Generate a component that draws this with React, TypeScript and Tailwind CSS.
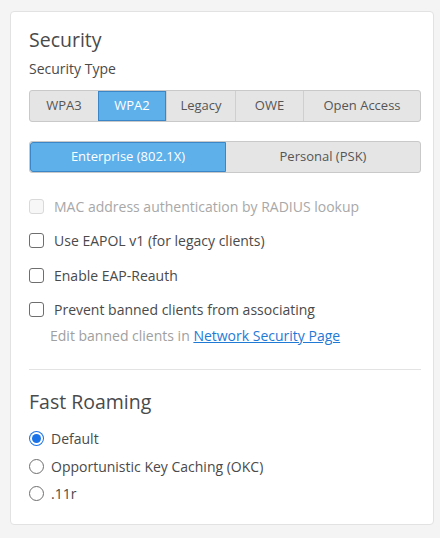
import React from "react";

const segs = ["WPA3", "WPA2", "Legacy", "OWE", "Open Access"];
const widths = ["w-[68px]", "w-[68px]", "w-[69px]", "w-[68px]", "flex-1"];

function Checkbox({ label, disabled }: { label: string; disabled?: boolean }) {
  return (
    <div className="flex items-center h-[20px]">
      <span
        className={`w-[15px] h-[15px] rounded-[3px] border ${
          disabled ? "border-[#d9d9d9] bg-[#f7f7f7]" : "border-[#6e6e6e] bg-white"
        }`}
      />
      <span className={`ml-[10px] text-[14px] ${disabled ? "text-[#a8a8a8]" : "text-[#4a4a4a]"}`}>{label}</span>
    </div>
  );
}

function Radio({ label, checked }: { label: string; checked?: boolean }) {
  return (
    <div className="flex items-center h-[20px]">
      {checked ? (
        <span className="w-[15px] h-[15px] rounded-full bg-[#1a73e8] flex items-center justify-center">
          <span className="w-[13px] h-[13px] rounded-full bg-white flex items-center justify-center">
            <span className="w-[9px] h-[9px] rounded-full bg-[#1a73e8]" />
          </span>
        </span>
      ) : (
        <span className="w-[15px] h-[15px] rounded-full border border-[#6e6e6e] bg-white" />
      )}
      <span className="ml-[7px] text-[14px] text-[#4a4a4a]">{label}</span>
    </div>
  );
}

export default function App() {
  return (
    <div className="w-[440px] h-[538px] bg-[#f4f4f4] pt-[11px] pl-[10px] pr-[6px]" style={{ fontFamily: '"Open Sans", sans-serif' }}>
      <div className="w-[424px] h-[514px] bg-white border border-[#e2e2e2] rounded-[4px] pl-[18px] pr-[12px] pt-[14px]">
        <div className="text-[19.5px] leading-[28px] text-[#4a4a4a]">Security</div>
        <div className="mt-[5px] text-[14px] leading-[20px] text-[#4a4a4a]">Security Type</div>
        <div className="mt-[11px] flex h-[32px] rounded-[3px] border border-[#c9c9c9] bg-[#e5e5e5] overflow-hidden">
          {segs.map((s, i) => (
            <div
              key={s}
              className={`${widths[i]} flex items-center justify-center text-[13px] ${
                i === 1
                  ? "bg-[#5eb0ea] text-white border border-[#3b86c6]"
                  : "text-[#555] " + (i > 1 ? "border-l border-[#cfcfcf]" : "")
              }`}
            >
              {s}
            </div>
          ))}
        </div>
        <div className="mt-[19px] flex h-[32px] rounded-[3px] border border-[#c9c9c9] bg-[#e5e5e5] overflow-hidden">
          <div className="w-[196px] bg-[#5eb0ea] border border-[#3b86c6] rounded-l-[3px] text-white text-[13px] flex items-center justify-center">
            Enterprise (802.1X)
          </div>
          <div className="flex-1 text-[#555] text-[13px] flex items-center justify-center">Personal (PSK)</div>
        </div>
        <div className="mt-[23px] flex flex-col gap-[14.5px]">
          <Checkbox label="MAC address authentication by RADIUS lookup" disabled />
          <Checkbox label="Use EAPOL v1 (for legacy clients)" />
          <Checkbox label="Enable EAP-Reauth" />
          <Checkbox label="Prevent banned clients from associating" />
        </div>
        <div className="mt-[6px] pl-[21px] text-[14px] leading-[20px] text-[#a0a0a0]">
          Edit banned clients in{" "}
          <a className="text-[#1f7ad6] underline" href="#">
            Network Security Page
          </a>
        </div>
        <div className="mt-[23px] h-px bg-[#e3e3e3]" />
        <div className="mt-[18px] text-[19.5px] leading-[28px] text-[#4a4a4a]">Fast Roaming</div>
        <div className="mt-[13px] flex flex-col gap-[7.5px]">
          <Radio label="Default" checked />
          <Radio label="Opportunistic Key Caching (OKC)" />
          <Radio label=".11r" />
        </div>
      </div>
    </div>
  );
}
